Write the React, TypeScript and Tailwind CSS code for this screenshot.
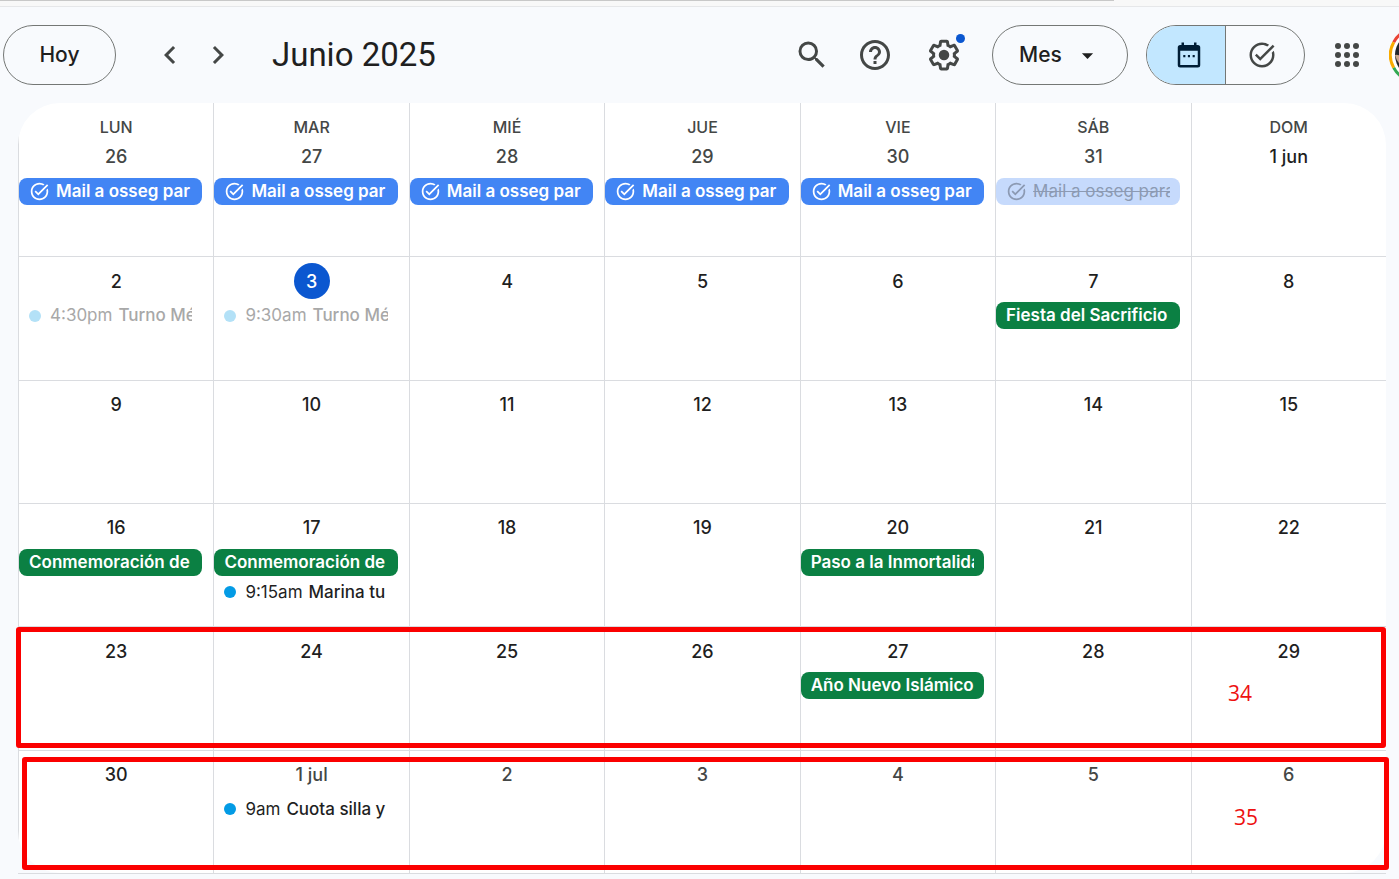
import type { ReactNode } from "react";
import { MdArrowDropDown, MdChevronLeft, MdChevronRight, MdHelpOutline, MdSearch, MdTaskAlt } from "react-icons/md";

type Kind = "task" | "taskDone" | "holiday" | "timed" | "timedPast";
type Entry = { kind: Kind; title: string; time?: string };
type Day = { label: string; tone?: "muted" | "today"; entries?: Entry[] };

const weekdays = ["LUN", "MAR", "MIÉ", "JUE", "VIE", "SÁB", "DOM"];
const mail: Entry = { kind: "task", title: "Mail a osseg par" };
const plain = (...labels: string[]): Day[] => labels.map((label) => ({ label }));

const weeks: Day[][] = [
  [
    ...["26", "27", "28", "29", "30"].map((label): Day => ({ label, tone: "muted", entries: [mail] })),
    { label: "31", tone: "muted", entries: [{ kind: "taskDone", title: "Mail a osseg para" }] },
    { label: "1 jun" },
  ],
  [
    { label: "2", entries: [{ kind: "timedPast", time: "4:30pm", title: "Turno Médico" }] },
    { label: "3", tone: "today", entries: [{ kind: "timedPast", time: "9:30am", title: "Turno Médico" }] },
    ...plain("4", "5", "6"),
    { label: "7", entries: [{ kind: "holiday", title: "Fiesta del Sacrificio" }] },
    { label: "8" },
  ],
  plain("9", "10", "11", "12", "13", "14", "15"),
  [
    { label: "16", entries: [{ kind: "holiday", title: "Conmemoración de" }] },
    {
      label: "17",
      entries: [
        { kind: "holiday", title: "Conmemoración de" },
        { kind: "timed", time: "9:15am", title: "Marina tu" },
      ],
    },
    ...plain("18", "19"),
    { label: "20", entries: [{ kind: "holiday", title: "Paso a la Inmortalidad" }] },
    ...plain("21", "22"),
  ],
  [
    ...plain("23", "24", "25", "26"),
    { label: "27", entries: [{ kind: "holiday", title: "Año Nuevo Islámico" }] },
    ...plain("28", "29"),
  ],
  [
    { label: "30" },
    { label: "1 jul", tone: "muted", entries: [{ kind: "timed", time: "9am", title: "Cuota silla y" }] },
    ...["2", "3", "4", "5", "6"].map((label): Day => ({ label, tone: "muted" })),
  ],
];

const chipStyle: Record<Kind, string> = {
  task: "bg-[#4285f4] font-semibold text-white",
  taskDone: "bg-[#c6dafc] text-[#8c9ab3]",
  holiday: "bg-[#0b8043] font-semibold text-white",
  timed: "text-[#1f1f1f]",
  timedPast: "text-[#a8a8a8]",
};

function Chip({ entry }: { entry: Entry }) {
  const { kind, time, title } = entry;
  const timed = kind === "timed" || kind === "timedPast";
  return (
    <button
      type="button"
      className={`mb-[3px] flex h-[27px] w-[calc(100%-11px)] items-center rounded-lg px-[10px] text-left text-[17px] leading-[27px] ${chipStyle[kind]}`}
    >
      {timed && (
        <span className={`mr-[9px] size-3 shrink-0 rounded-full ${kind === "timed" ? "bg-[#039be5]" : "bg-[#b3e1f7]"}`} />
      )}
      {(kind === "task" || kind === "taskDone") && <MdTaskAlt className="mr-[6px] size-[21px] shrink-0" />}
      <span className="min-w-0 flex-1 overflow-hidden whitespace-nowrap">
        {time && <span className="mr-[6px]">{time}</span>}
        <span className={timed ? "font-medium" : kind === "taskDone" ? "line-through" : ""}>{title}</span>
      </span>
    </button>
  );
}

function DayCell({ day, first }: { day: Day; first: boolean }) {
  const tone =
    day.tone === "today" ? "bg-[#0b57d0] text-white" : day.tone === "muted" ? "text-[#444746]" : "text-[#1f1f1f]";
  return (
    <td className={`border-l border-[#dadce0] p-0 align-top ${first ? "pb-1" : "border-t"}`}>
      <div className={`flex justify-center ${first ? "pb-1" : "pt-[6px] pb-[3px]"}`}>
        <span className={`flex h-9 min-w-9 items-center justify-center rounded-full text-[18px] font-medium ${tone}`}>
          {day.label}
        </span>
      </div>
      {day.entries?.map((entry, i) => <Chip key={i} entry={entry} />)}
    </td>
  );
}

function IconButton({ label, children }: { label: string; children: ReactNode }) {
  return (
    <button type="button" aria-label={label} className="relative flex h-12 items-center justify-center text-[#444746]">
      {children}
    </button>
  );
}

function GearIcon() {
  return (
    <svg viewBox="0 0 24 24" className="size-9" fill="currentColor">
      <path d="M13.85 22.25h-3.7c-.74 0-1.36-.54-1.45-1.27l-.27-1.89c-.27-.14-.53-.29-.79-.46l-1.8.72c-.7.26-1.47-.03-1.81-.65L2.2 15.53c-.35-.66-.2-1.44.36-1.88l1.53-1.19c-.01-.15-.02-.3-.02-.46 0-.15.01-.31.02-.46l-1.52-1.19c-.59-.45-.74-1.26-.37-1.88l1.85-3.19c.34-.62 1.11-.9 1.79-.63l1.81.73c.26-.17.52-.32.78-.46l.27-1.91c.09-.7.71-1.25 1.44-1.25h3.7c.74 0 1.36.54 1.45 1.27l.27 1.89c.27.14.53.29.79.46l1.8-.72c.71-.26 1.48.03 1.82.65l1.84 3.18c.36.66.2 1.44-.36 1.88l-1.52 1.19c.01.15.02.3.02.46s-.01.31-.02.46l1.52 1.19c.56.45.72 1.23.37 1.86l-1.86 3.22c-.34.62-1.11.9-1.8.63l-1.8-.72c-.26.17-.52.32-.78.46l-.27 1.91c-.1.68-.72 1.22-1.46 1.22zm-3.23-2h2.76l.37-2.55.53-.22c.44-.18.88-.44 1.34-.78l.45-.34 2.38.96 1.38-2.4-2.03-1.58.07-.56c.03-.26.06-.51.06-.78s-.03-.53-.06-.78l-.07-.56 2.03-1.58-1.39-2.4-2.39.96-.45-.35c-.42-.32-.87-.58-1.33-.77l-.52-.22-.37-2.55h-2.76l-.37 2.55-.53.21c-.44.19-.88.44-1.34.79l-.45.33-2.38-.95-1.39 2.39 2.03 1.58-.07.56a7 7 0 0 0-.06.79c0 .26.02.53.06.78l.07.56-2.03 1.58 1.38 2.4 2.39-.96.45.35c.43.33.86.58 1.33.77l.53.22.38 2.55z" />
      <circle cx="12" cy="12" r="3.5" />
    </svg>
  );
}

function CalendarIcon() {
  return (
    <svg viewBox="0 0 24 24" className="size-[30px]" fill="currentColor">
      <path
        fillRule="evenodd"
        d="M6 2h2v2h8V2h2v2h1a2 2 0 0 1 2 2v14a2 2 0 0 1-2 2H5a2 2 0 0 1-2-2V6a2 2 0 0 1 2-2h1zM5 8.6V20h14V8.6z"
      />
      <path d="M7.4 12h1.7v1.7H7.4zM11.1 12h1.7v1.7h-1.7zM14.9 12h1.7v1.7h-1.7z" />
    </svg>
  );
}

function AppsIcon() {
  return (
    <svg viewBox="0 0 24 24" className="size-9" fill="currentColor">
      {[6, 12, 18].map((y) => [6, 12, 18].map((x) => <circle key={`${x}-${y}`} cx={x} cy={y} r="2" />))}
    </svg>
  );
}

function Avatar() {
  return (
    <svg viewBox="0 0 56 56" className="size-14">
      <circle cx="28" cy="28" r="28" fill="#fff" />
      <g fill="none" strokeWidth="3">
        <path d="M4.7 15.2A26.5 26.5 0 0 1 51.3 15.2" stroke="#ea4335" />
        <path d="M4.7 40.8A26.5 26.5 0 0 1 4.7 15.2" stroke="#f9ab00" />
        <path d="M51.3 40.8A26.5 26.5 0 0 1 4.7 40.8" stroke="#34a853" />
        <path d="M51.3 15.2A26.5 26.5 0 0 1 51.3 40.8" stroke="#4285f4" />
      </g>
      <circle cx="28" cy="28" r="22" fill="#22252b" />
      <path d="M6 28q5-1 10 4l-2 8q-6-4-8-12" fill="#c9a58c" />
    </svg>
  );
}

export default function App() {
  return (
    <div className="min-h-screen overflow-hidden bg-[#f8fafd] font-['Inter',sans-serif] text-[#1f1f1f]">
      <div className="h-[7px] border-b border-[#e6e7e9] bg-[#f8f8f8]">
        <div className="h-px w-[1114px] max-w-full bg-[#c8c8c8]" />
      </div>

      <header className="flex h-24 items-center pl-[3px]">
        <button type="button" className="h-[60px] w-[113px] rounded-full border border-[#747775] text-[21px] font-medium">
          Hoy
        </button>
        <nav className="ml-9 flex gap-3">
          <IconButton label="Mes anterior">
            <MdChevronLeft className="size-9" />
          </IconButton>
          <IconButton label="Mes siguiente">
            <MdChevronRight className="size-9" />
          </IconButton>
        </nav>
        <h1 className="ml-9 font-['Roboto',sans-serif] text-[33px] whitespace-nowrap">Junio 2025</h1>

        <div className="-mr-[46px] ml-auto flex shrink-0 items-center">
          <div className="mr-[30px] flex gap-[27px]">
            <IconButton label="Buscar">
              <MdSearch className="size-9" />
            </IconButton>
            <IconButton label="Ayuda">
              <MdHelpOutline className="size-9" />
            </IconButton>
            <div className="ml-[6px]">
              <IconButton label="Configuración">
                <GearIcon />
                <span className="absolute top-[3px] -right-[3px] size-[9px] rounded-full bg-[#0b57d0]" />
              </IconButton>
            </div>
          </div>
          <button
            type="button"
            className="mr-[18px] flex h-[60px] w-[136px] items-center justify-center gap-3 rounded-full border border-[#747775] text-[21px] font-medium"
          >
            Mes
            <MdArrowDropDown className="size-[27px]" />
          </button>
          <div className="mr-6 flex h-[60px] w-[159px] overflow-hidden rounded-full border border-[#747775]">
            <button
              type="button"
              aria-label="Calendario"
              className="flex flex-1 items-center justify-center border-r border-[#747775] bg-[#c2e7ff] pl-[6px] text-[#001d35]"
            >
              <CalendarIcon />
            </button>
            <button type="button" aria-label="Tareas" className="flex flex-1 items-center justify-center pr-[6px] text-[#444746]">
              <MdTaskAlt className="size-[30px]" />
            </button>
          </div>
          <IconButton label="Aplicaciones">
            <AppsIcon />
          </IconButton>
          <button type="button" aria-label="Cuenta" className="ml-6">
            <Avatar />
          </button>
        </div>
      </header>

      <main className="relative mr-[13px] ml-[18px] border-b border-[#dadce0]">
        <table className="h-[calc(100vh-109px)] w-full table-fixed border-separate border-spacing-0 overflow-hidden rounded-[42px] bg-white">
          <thead>
            <tr className="h-[35px]">
              {weekdays.map((name) => (
                <th
                  key={name}
                  className="border-l border-[#dadce0] p-0 pt-[14px] align-top text-[16px] leading-[21px] font-medium text-[#444746]"
                >
                  {name}
                </th>
              ))}
            </tr>
          </thead>
          <tbody>
            {weeks.map((week, w) => (
              <tr key={w} className={w === 0 ? "h-[118px]" : "h-[123px]"}>
                {week.map((day, d) => (
                  <DayCell key={d} day={day} first={w === 0} />
                ))}
              </tr>
            ))}
          </tbody>
        </table>

        <div className="pointer-events-none absolute top-[524px] right-0 -left-[2px] h-[121px] rounded-[3px] border-5 border-[#fb0000]">
          <span className="absolute top-[46px] right-[129px] font-['Open_Sans',sans-serif] text-[21px] leading-[30px] text-[#e11]">
            34
          </span>
        </div>
        <div className="pointer-events-none absolute top-[654px] -right-[3px] left-1 h-[113px] rounded-[3px] border-5 border-[#fb0000]">
          <span className="absolute top-[40px] right-[126px] font-['Open_Sans',sans-serif] text-[21px] leading-[30px] text-[#e11]">
            35
          </span>
        </div>
      </main>
    </div>
  );
}
